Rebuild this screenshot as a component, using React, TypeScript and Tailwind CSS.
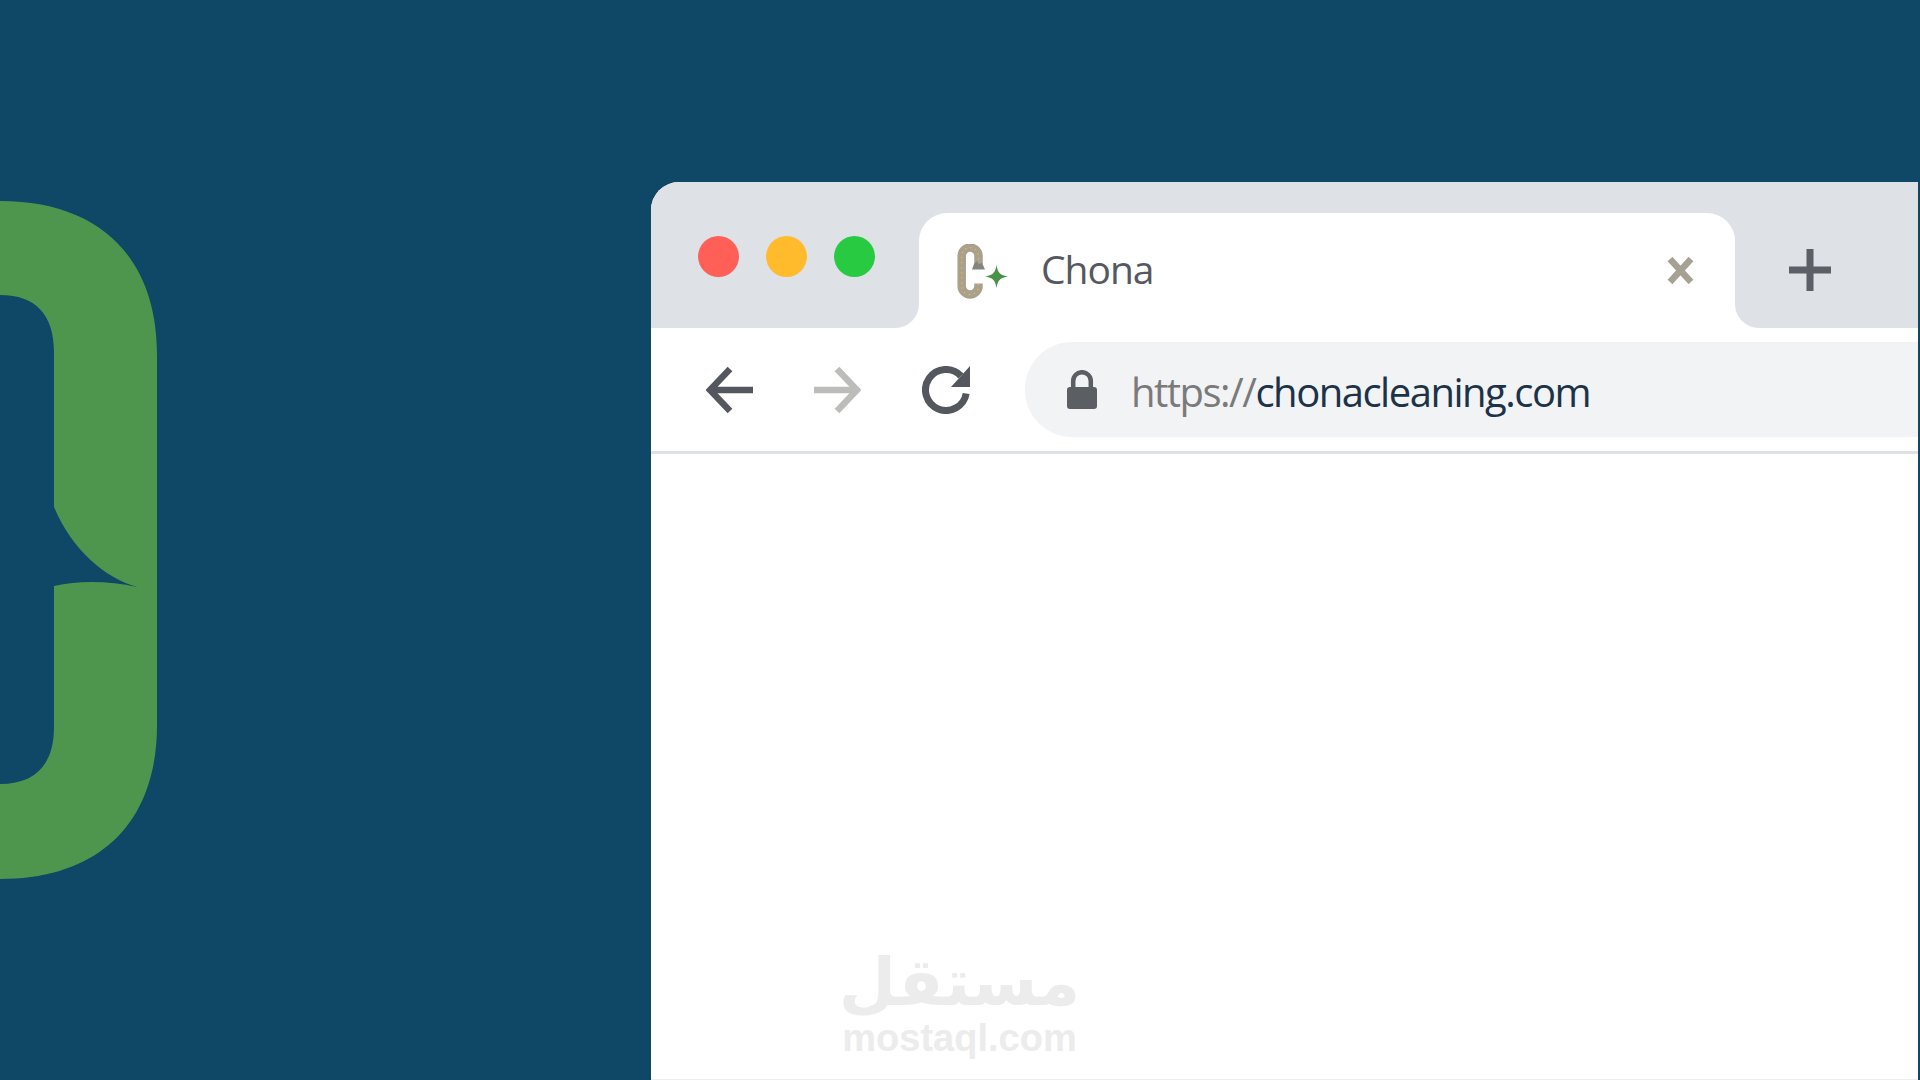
const dots = ['bg-[#ff5f57]', 'bg-[#ffbb2c]', 'bg-[#28ca42]'];

function Favicon() {
  return (
    <svg width="52" height="56" viewBox="0 0 52 56" fill="none" className="mt-[2px]">
      <path d="M21.500 20V12a8.400 8.400 0 0 0-16.800 0V42a8.400 8.400 0 0 0 16.800 0V39.500" stroke="#a9a18d" strokeWidth="8.500" />
      <path d="M21.500 20V12a8.400 8.400 0 0 0-16.800 0V42a8.400 8.400 0 0 0 16.800 0V39.500" stroke="#f2b632" strokeWidth="1.400" strokeLinecap="round" strokeDasharray="0.1 5" />
      <path d="M15 25.500 17 20l2.500-3 2.500 3 3-1 3 6.500Z" fill="#85857f" />
      <path d="M39.500 21c1 7.500 4 10.500 11.500 11.500-7.500 1-10.500 4-11.500 11.500-1-7.500-4-10.500-11.500-11.500 7.500-1 10.500-4 11.500-11.500Z" fill="#4a9148" />
    </svg>
  );
}

function ArrowIcon({ color, flip }: { color: string; flip?: boolean }) {
  return (
    <svg width="48" height="48" viewBox="0 0 48 48" fill="none" className={flip ? '-scale-x-100' : 'ml-px mr-[-1px]'}>
      <path d="M24 3 4 24l20 21M5 24h42" stroke={color} strokeWidth="6.500" />
    </svg>
  );
}

function ReloadIcon() {
  return (
    <svg width="48" height="48" viewBox="0 0 48 48" fill="none" className="ml-px">
      <path d="M39 10A20.500 20.500 0 1 0 44.200 27.500" stroke="#54585e" strokeWidth="7" />
      <path d="M48 0v21H29Z" fill="#54585e" />
    </svg>
  );
}

function LockIcon() {
  return (
    <svg width="30" height="39" viewBox="0 0 30 39" fill="none">
      <path d="M6.200 19v-8a8.800 8.800 0 0 1 17.600 0v8" stroke="#5b5e63" strokeWidth="4.500" />
      <rect y="17" width="30" height="22" rx="3" fill="#5b5e63" />
    </svg>
  );
}

export default function App() {
  return (
    <div className="relative h-[1080px] w-[1920px] overflow-hidden bg-[#0f4767] pl-[651px] pr-[2px] pt-[182px] font-['Open_Sans',sans-serif]">
      {/* big logo cut off on the left */}
      <svg className="absolute left-0 top-[200px]" width="157" height="680" viewBox="0 200 157 680">
        <path
          d="M0 201C100 201 157 258 157 355V725C157 822 100 879 0 879V784C36 784 54 764 54 727V586C80 580 110 581 137 587 105 578 72 550 54 507V352C54 315 36 295 0 295Z"
          fill="#4e964e"
        />
      </svg>

      <div className="flex h-[898px] flex-col overflow-hidden rounded-tl-[28px] border-b border-[#eeeeee] bg-white">
        {/* tab strip */}
        <div className="flex h-[146px] shrink-0">
          <div className="flex w-[268px] shrink-0 gap-[27px] rounded-br-[24px] bg-[#dee1e6] pl-[47px] pt-[54px]">
            {dots.map((dot) => (
              <div key={dot} className={`h-[41px] w-[41px] rounded-full ${dot}`} />
            ))}
          </div>
          <div className="w-[816px] shrink-0 bg-[#dee1e6] pt-[31px]">
            <div className="flex h-[115px] items-center rounded-t-[28px] bg-white pl-[38px] pr-[41px]">
              <Favicon />
              <span className="mb-[4px] ml-[32px] text-[39px] leading-none tracking-[-1px] text-[#55595f]">Chona</span>
              <svg className="ml-auto" width="27" height="27" viewBox="0 0 27 27" fill="none">
                <path d="M3 2 24 25M24 2 3 25" stroke="#a5a294" strokeWidth="6.500" />
              </svg>
            </div>
          </div>
          <div className="flex flex-1 items-center rounded-bl-[24px] bg-[#dee1e6] pl-[54px] pt-[30px]">
            <svg width="42" height="42" viewBox="0 0 42 42" fill="none">
              <path d="M21 0v42M0 21h42" stroke="#5c5f66" strokeWidth="7" />
            </svg>
          </div>
        </div>

        {/* toolbar */}
        <div className="flex h-[123px] shrink-0 items-center gap-[60px] pl-[54px]">
          <ArrowIcon color="#54585e" />
          <ArrowIcon color="#bcbcba" flip />
          <ReloadIcon />
          <div className="ml-[-5px] flex h-[95px] flex-1 items-center rounded-l-[47px] bg-[#f1f3f4] pl-[42px]">
            <LockIcon />
            <span className="ml-[34px] mt-[4px] text-[40px] leading-none tracking-[-1.500px] text-[#7a7a7a]">
              https://<span className="text-[#1c3249]">chonacleaning.com</span>
            </span>
          </div>
        </div>
        <div className="h-[3px] shrink-0 bg-[#dee1e6]" />

        {/* page content, empty except the watermark */}
        <div className="flex flex-1 flex-col items-start pl-[193px] pt-[492px]">
          <div className="flex w-[231px] flex-col items-center text-[#ececec]">
            <span dir="rtl" lang="ar" className="font-['DejaVu_Sans',sans-serif] text-[66px] font-bold leading-[74px]">مستقل</span>
            <span className="font-['Liberation_Sans',sans-serif] text-[38px] font-bold leading-[36px]">mostaql.com</span>
          </div>
        </div>
      </div>
    </div>
  );
}
